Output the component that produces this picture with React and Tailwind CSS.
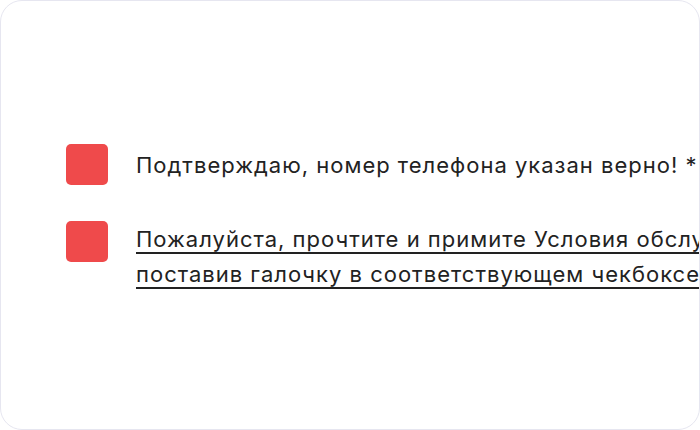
import React from "react"

function RedBox() {
  return <div className="w-[42px] h-[41px] shrink-0 rounded-[5px] bg-[#ef4a4b]" />
}

export default function App() {
  return (
    <div className="w-[700px] h-[430px] bg-white">
      <div
        className="w-full h-full overflow-hidden rounded-[22px] border-[1.5px] border-[#e6e6f0] bg-white pl-[65px] pt-[143px]"
        style={{ fontFamily: "Inter, 'Noto Sans', sans-serif" }}
      >
        <div className="flex flex-col gap-[36px]">
          <div className="flex items-center gap-[28px]">
            <RedBox />
            <span className="whitespace-nowrap text-[22px] leading-[34px] tracking-[1px] text-[#222222]">
              Подтверждаю, номер телефона указан верно! *
            </span>
          </div>
          <div className="flex items-start gap-[28px]">
            <RedBox />
            <a className="mt-[1px] block shrink-0 whitespace-nowrap text-[22px] leading-[35px] tracking-[1px] text-[#222222] underline decoration-[1.5px] underline-offset-[5px]">
              Пожалуйста, прочтите и примите Условия обслуживания,
              <br />
              поставив галочку в соответствующем чекбоксе.
            </a>
          </div>
        </div>
      </div>
    </div>
  )
}
